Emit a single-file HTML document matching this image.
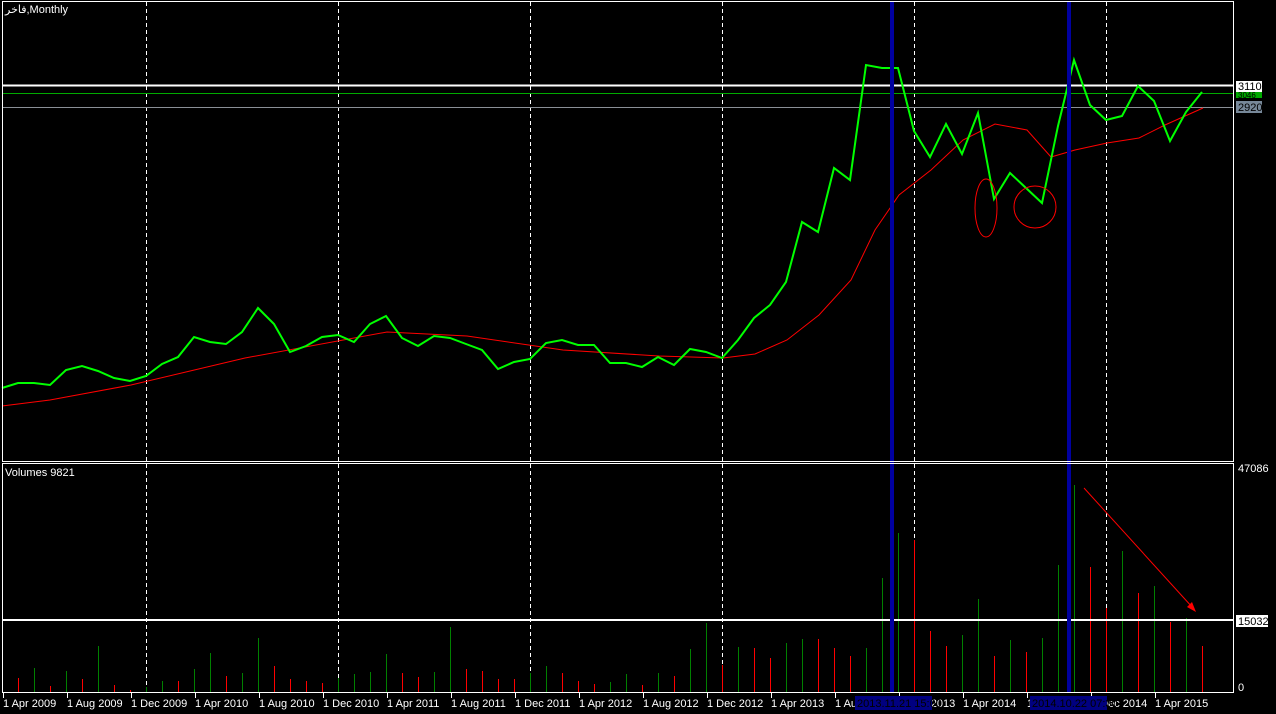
<!DOCTYPE html>
<html><head><meta charset="utf-8"><style>
html,body{margin:0;padding:0;background:#000;width:1276px;height:714px;overflow:hidden}
svg{display:block}
text{font-family:"Liberation Sans","DejaVu Sans",sans-serif;font-size:11px;fill:#fff}
</style></head><body>
<svg id="s" width="1276" height="714" xmlns="http://www.w3.org/2000/svg">
<rect width="1276" height="714" fill="#000"/>
<g id="grid"></g>
<g id="vol"></g>
<line x1="2" y1="85.5" x2="1233" y2="85.5" stroke="#fff" stroke-width="2"/>
<line x1="2" y1="93.5" x2="1233" y2="93.5" stroke="#0a0" stroke-width="1"/>
<line x1="2" y1="107.5" x2="1233" y2="107.5" stroke="#8a8f96" stroke-width="1"/>
<line x1="2" y1="620" x2="1233" y2="620" stroke="#fff" stroke-width="2"/>
<polyline id="ma" fill="none" stroke="#f00" stroke-width="1"/>
<polyline id="pr" fill="none" stroke="#0f0" stroke-width="2"/>
<rect x="890" y="2" width="4" height="691" fill="#0000a0"/>
<rect x="1067" y="2" width="4" height="691" fill="#0000a0"/>
<ellipse cx="986" cy="208" rx="11" ry="29" fill="none" stroke="#f00" stroke-width="1"/>
<circle cx="1035" cy="207" r="21" fill="none" stroke="#f00" stroke-width="1"/>
<line x1="1084" y1="488" x2="1193" y2="608" stroke="#f00" stroke-width="1"/>
<polygon points="1196,612 1187,607 1192,602" fill="#f00"/>
<rect x="2.5" y="1.5" width="1231" height="460" fill="none" stroke="#fff" stroke-width="1"/>
<rect x="2.5" y="463.5" width="1231" height="229" fill="none" stroke="#fff" stroke-width="1"/>
<text x="5" y="13">فاخر,Monthly</text>
<text x="5" y="476">Volumes 9821</text>
<rect x="1236" y="81" width="26" height="11" fill="#fff"/><text x="1238" y="90" style="fill:#000">3110</text>
<rect x="1236" y="92" width="26" height="6" fill="#0a0"/><text x="1238" y="98" style="fill:#000;font-size:8px">3046</text>
<rect x="1236" y="101" width="26" height="12" fill="#789"/><text x="1238" y="111" style="fill:#000">2920</text>
<text x="1238" y="472">47086</text>
<rect x="1236" y="615" width="32" height="12" fill="#fff"/><text x="1238" y="625" style="fill:#000">15032</text>
<text x="1238" y="691">0</text>
<g id="ax"></g>
<rect x="855" y="696" width="77" height="14" fill="#000080"/><text x="857" y="707" style="fill:#000">2013.11.21 15:00</text>
<rect x="1030" y="696" width="77" height="14" fill="#000080"/><text x="1032" y="707" style="fill:#000">2014.10.22 07:30</text>
</svg>
<script>
var NS="http://www.w3.org/2000/svg";
function el(p,t,a,tx){var e=document.createElementNS(NS,t);for(var k in a)e.setAttribute(k,a[k]);if(tx)e.textContent=tx;document.getElementById(p).appendChild(e);return e;}
var P=[388,383,383,385,370,366,371,378,381,376,364,357,337,342,344,332,308,324,352,346,337,335,342,324,316,338,346,336,338,344,350,369,362,359,343,340,345,345,363,363,367,357,365,349,352,358,340,318,305,282,222,232,168,180,65,68,68,131,157,124,154,113,199,173,188,203,126,60,105,120,116,86,101,141,112,92];
document.getElementById("pr").setAttribute("points",P.map(function(y,i){return (2+16*i)+","+y}).join(" "));
var M=[[2,406],[50,400],[131,385],[245,358],[387,332],[467,336],[563,350],[659,356],[723,358],[755,354],[787,340],[819,315],[851,280],[875,230],[899,195],[931,170],[963,140],[995,124],[1027,130],[1051,157],[1075,150],[1107,143],[1139,138],[1165,125],[1203,108]];
document.getElementById("ma").setAttribute("points",M.map(function(p){return p.join(",")}).join(" "));
[146,338,530,722,914,1106].forEach(function(x){el("grid","line",{x1:x+0.5,y1:2,x2:x+0.5,y2:692,stroke:"#fff","stroke-dasharray":"4,3","stroke-width":1});});
var V=[0,678,668,686,671,679,646,685,690,687,681,681,669,653,676,673,638,666,679,681,683,678,674,672,654,673,677,672,627,669,671,679,679,673,666,673,681,684,682,674,685,673,676,649,623,665,647,648,658,643,639,639,648,656,648,578,533,540,631,646,635,599,656,640,652,638,565,485,567,608,551,593,586,622,618,646];
var C="xrgrgrgrrggrggrggrrrrggggrrggrrrrggrrrggrgrggrgrrggrrrgggrrrggrgrgggrrgrgrgr";
for(var i=1;i<V.length;i++){
 el("vol","line",{x1:2+16*i+0.5,y1:V[i],x2:2+16*i+0.5,y2:692,stroke:C[i]=="g"?"#008000":"#f00","stroke-width":1});}
var L=["1 Apr 2009","1 Aug 2009","1 Dec 2009","1 Apr 2010","1 Aug 2010","1 Dec 2010","1 Apr 2011","1 Aug 2011","1 Dec 2011","1 Apr 2012","1 Aug 2012","1 Dec 2012","1 Apr 2013","1 Aug 2013","1 Dec 2013","1 Apr 2014","1 Aug 2014","1 Dec 2014","1 Apr 2015"];
L.forEach(function(t,k){var x=3+64*k;el("ax","line",{x1:x+0.5,y1:693,x2:x+0.5,y2:698,stroke:"#fff"});el("ax","text",{x:x,y:707},t);});
</script>
</body></html>
